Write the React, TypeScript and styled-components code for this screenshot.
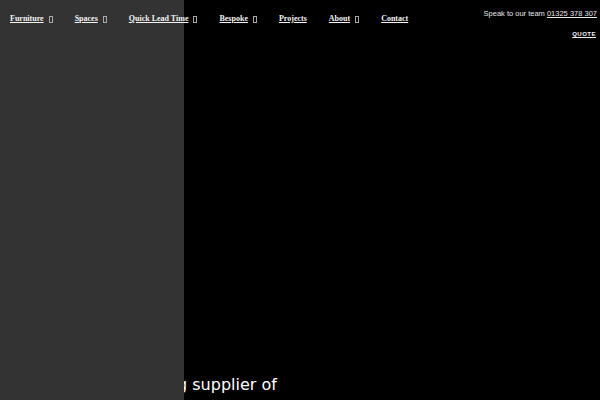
import React from "react";
import styled, { createGlobalStyle } from "styled-components";

const Global = createGlobalStyle`
  html, body { margin: 0; padding: 0; background: #000; }
  body { width: 600px; height: 400px; overflow: hidden; }
  #root { width: 600px; height: 400px; }
`;

const Page = styled.div`
  position: relative;
  width: 600px;
  height: 400px;
  background: #000;
  overflow: hidden;
  display: flex;
  flex-direction: column;
`;

const SidePanel = styled.div`
  position: absolute;
  left: 0;
  top: 0;
  bottom: 0;
  width: 184px;
  background: #333333;
  z-index: 1;
`;

const Header = styled.header`
  position: relative;
  z-index: 2;
  display: flex;
  justify-content: space-between;
  align-items: flex-start;
  padding: 0 3px 0 10px;
`;

const Nav = styled.nav`
  display: flex;
  align-items: center;
  height: 36px;
  gap: 22px;
`;

const NavItem = styled.a`
  display: flex;
  align-items: center;
  gap: 5px;
  font-family: "Liberation Serif", serif;
  font-weight: bold;
  font-size: 8px;
  color: #f2f2f2;
  text-decoration: underline;
  cursor: pointer;
`;

const Caret = styled.span`
  display: inline-block;
  width: 2px;
  height: 5px;
  border: 1px solid #a8a8a8;
  box-sizing: content-box;
  margin-top: 2px;
`;

const Contact = styled.div`
  display: flex;
  flex-direction: column;
  align-items: flex-end;
  padding-top: 9px;
  gap: 10px;
`;

const Speak = styled.div`
  font-family: "Liberation Sans", sans-serif;
  font-size: 7.5px;
  color: #e6e6e6;
  line-height: 10px;
`;

const Phone = styled.a`
  color: #e6e6e6;
  text-decoration: underline;
`;

const Quote = styled.a`
  font-family: "Liberation Sans", sans-serif;
  font-weight: bold;
  font-size: 6px;
  letter-spacing: 0.5px;
  margin-right: 1px;
  color: #f2f2f2;
  text-decoration: underline;
  line-height: 10px;
`;

const Hero = styled.div`
  flex: 1;
  display: flex;
  align-items: flex-end;
  padding-left: 124px;
`;

const Heading = styled.h1`
  margin: 0 0 5px 0;
  font-family: "DejaVu Sans", sans-serif;
  font-weight: normal;
  font-size: 16px;
  color: #ffffff;
  line-height: 20px;
  white-space: nowrap;
`;

const items: { label: string; drop: boolean }[] = [
  { label: "Furniture", drop: true },
  { label: "Spaces", drop: true },
  { label: "Quick Lead Time", drop: true },
  { label: "Bespoke", drop: true },
  { label: "Projects", drop: false },
  { label: "About", drop: true },
  { label: "Contact", drop: false },
];

export default function App() {
  return (
    <>
      <Global />
      <Page>
        <SidePanel />
        <Header>
          <Nav>
            {items.map((it) => (
              <NavItem key={it.label}>
                {it.label}
                {it.drop && <Caret />}
              </NavItem>
            ))}
          </Nav>
          <Contact>
            <Speak>
              Speak to our team <Phone>01325 378 307</Phone>
            </Speak>
            <Quote>QUOTE</Quote>
          </Contact>
        </Header>
        <Hero>
          <Heading>Leading supplier of</Heading>
        </Hero>
      </Page>
    </>
  );
}
